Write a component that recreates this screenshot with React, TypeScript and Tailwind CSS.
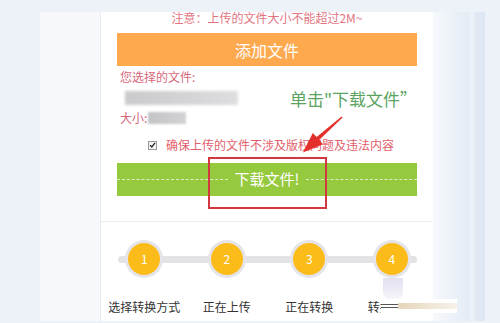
import React from 'react';

const steps = ['选择转换方式', '正在上传', '正在转换', '转换完成'];

function StepCircle({ n }: { n: number }) {
  return (
    <div className="h-[38px] w-[38px] rounded-full bg-[#e5e4ea] p-[3px]">
      <div className="flex h-full w-full items-center justify-center rounded-full bg-[#fbbc1a] text-[12px] text-white">
        {n}
      </div>
    </div>
  );
}

export default function App() {
  return (
    <div className="relative flex h-[323px] w-[500px] overflow-hidden bg-[#edf2f9] pt-[12px] pb-[2px] font-['Noto_Sans_CJK_SC','Noto_Sans',sans-serif]">
      <div className="ml-[40px] w-[60px] bg-[#f6f8fc]" />
      <div className="w-px bg-[#e6ebf2]" />

      <main className="flex w-[332px] flex-col bg-white">
        <p className="h-[21px] text-center text-[12px] leading-[12px] text-[#e3747f]">
          注意：上传的文件大小不能超过2M~
        </p>
        <div className="mx-[16px] flex h-[33px] items-center justify-center bg-[#ffa94f] text-[16px] text-white">
          添加文件
        </div>

        <div className="flex flex-col px-[19px]">
          <p className="mt-[5px] text-[12px] leading-[12px] text-[#d6677a]">您选择的文件:</p>
          <div className="mt-[8px] ml-[5px] h-[14px] w-[113px] bg-gradient-to-r from-[#cacacd] via-[#d3d3d6] to-[#dedee0] blur-[1.5px]" />
          <div className="mt-[7px] flex items-center gap-[1px]">
            <span className="text-[12px] leading-[12px] text-[#d6677a]">大小:</span>
            <span className="h-[12px] w-[38px] bg-gradient-to-r from-[#c4c4c7] to-[#d2d2d4] blur-[1px]" />
          </div>
          <div className="mt-[15px] ml-[28px] flex items-center gap-[9px]">
            <span className="flex h-[9px] w-[9px] items-center justify-center border border-[#9a9a9a] bg-[#f4f4f4]">
              <svg viewBox="0 0 10 10" className="h-[8px] w-[8px]">
                <path d="M1.5 5.2 L4 7.8 L8.6 2" fill="none" stroke="#222" strokeWidth="1.8" />
              </svg>
            </span>
            <span className="text-[12px] leading-[12px] text-[#e2606b]">确保上传的文件不涉及版权问题及违法内容</span>
          </div>
        </div>

        <div className="mx-[16px] mt-[12px] flex h-[33px] items-center bg-[#95c93e]">
          <span className="flex-1 border-t border-dashed border-white/70" />
          <span className="px-[7px] text-[15px] text-white">下载文件!</span>
          <span className="flex-1 border-t border-dashed border-white/70" />
        </div>

        <div className="mt-[25px] border-t border-[#ececef]" />

        <div className="relative grid grid-cols-4 pt-[18px] pl-[2px]">
          <div className="absolute top-[34px] right-[16px] left-[17px] h-[7px] rounded-full bg-[#e3e3e6]" />
          {steps.map((s, i) => (
            <div key={s} className="relative flex flex-col items-center">
              <StepCircle n={i + 1} />
              <span className="mt-[23px] whitespace-nowrap text-[12px] leading-[12px] text-[#333]">{s}</span>
            </div>
          ))}
        </div>
      </main>

      <div className="relative w-[52px] bg-gradient-to-r from-[#f6f9fc] via-[#e9eff7] to-[#dce6f2]">
        <div className="absolute top-0 bottom-0 left-[35px] w-[8px] bg-gradient-to-r from-transparent via-[#eef3f9] to-transparent" />
      </div>

      {/* annotations over the screenshot */}
      <p className="absolute top-[90px] left-[290px] text-[17px] leading-[17px] text-[#5aa361]">单击"下载文件”</p>
      <div className="absolute top-[157px] left-[208px] h-[52px] w-[119px] border-2 border-[#d2383f]" />
      <svg className="absolute inset-0" width="500" height="323" viewBox="0 0 500 323">
        <polygon
          points="342.6,117.6 319.2,140.1 323,144.2 303,152.5 312.8,133 316.6,137.1 341.6,116.4"
          fill="#e3302b"
        />
      </svg>
      <div className="absolute top-[278px] left-[383px] h-[22px] w-[20px] rounded-b-[8px] bg-gradient-to-b from-[#e3dff2] to-[#f7f6fb]" />
      <div className="absolute top-[299px] left-[381px] flex h-[14px] w-[76px] items-center bg-white">
        <div className="flex w-[17px] flex-col justify-center gap-[2px]">
          <span className="h-px bg-[#555]" />
          <span className="h-px bg-[#555]" />
        </div>
        <div className="h-[6px] flex-1 bg-gradient-to-r from-[#e6d6ba] to-[#f6f2ea] blur-[0.5px]" />
      </div>
    </div>
  );
}
